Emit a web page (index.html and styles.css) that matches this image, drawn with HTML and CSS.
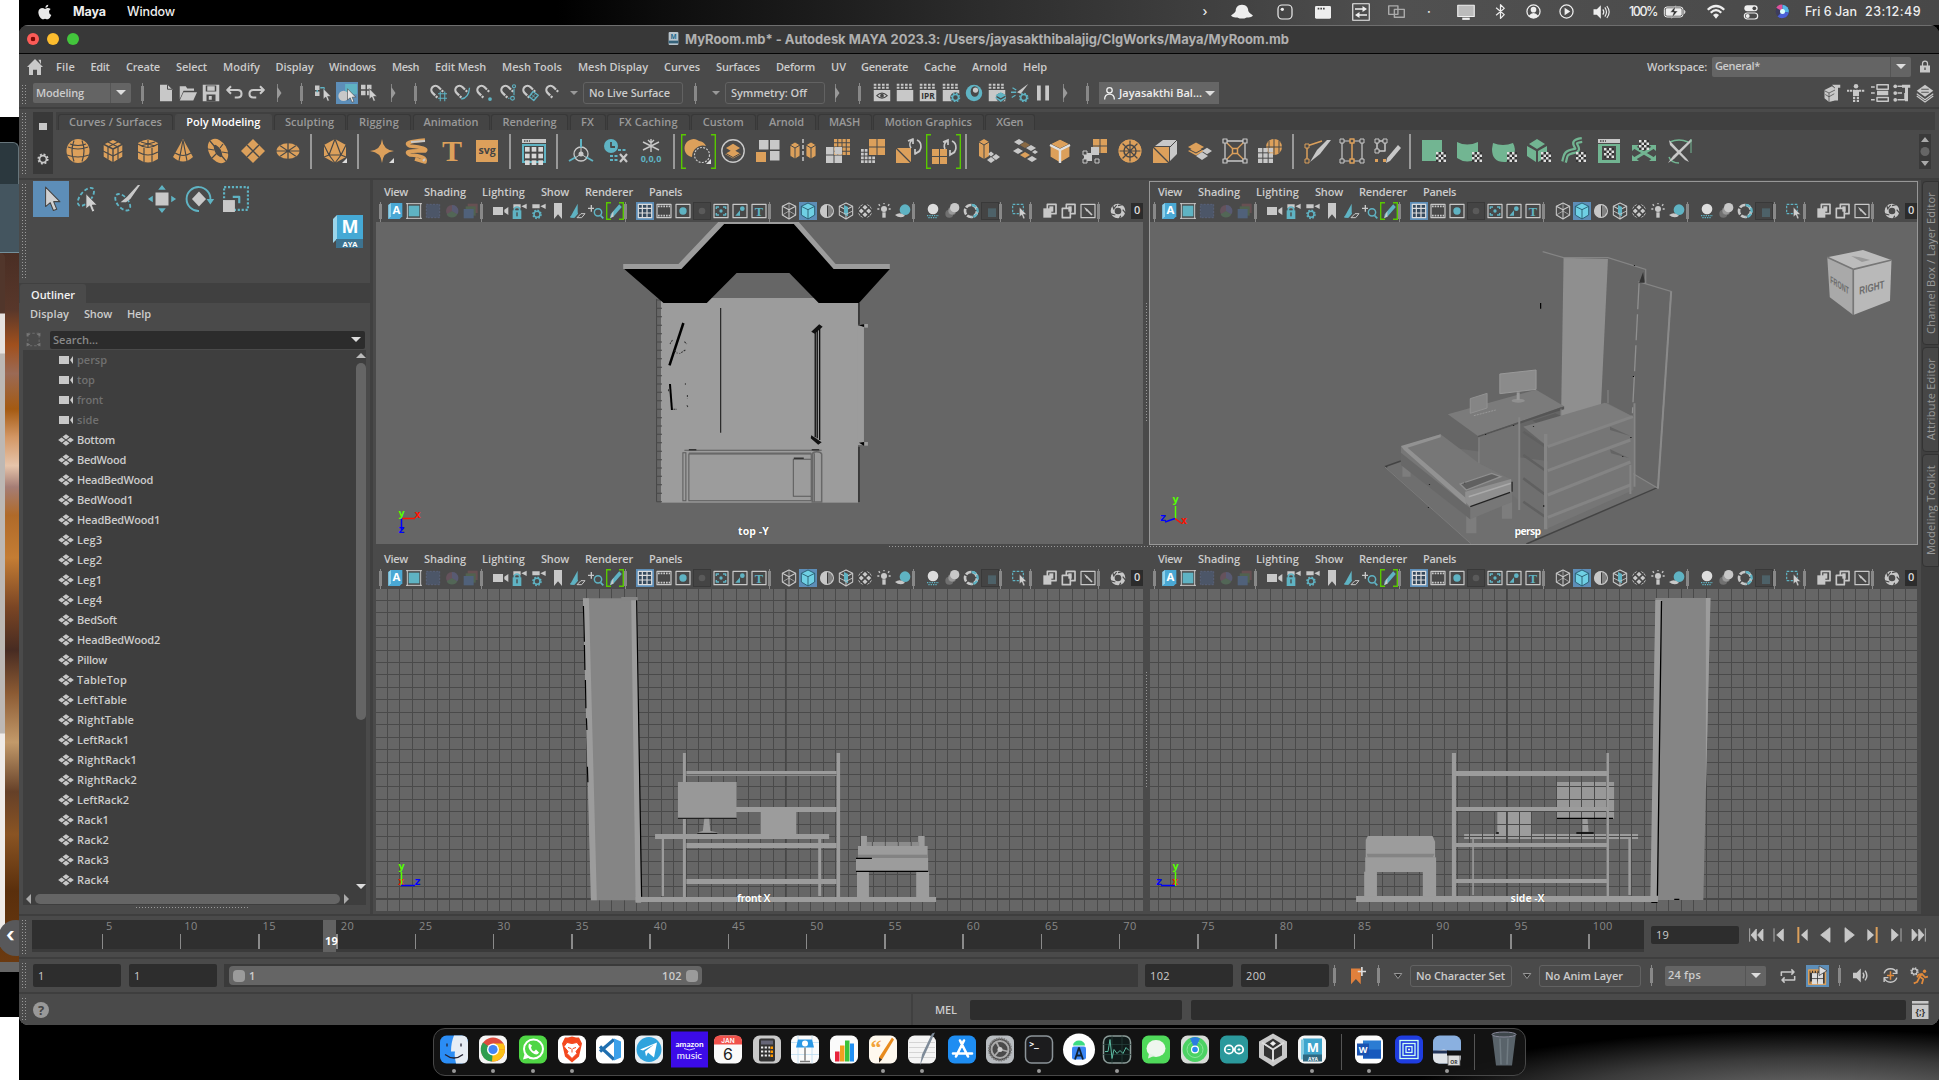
FILE: index.html
```html
<!DOCTYPE html>
<html lang="en">
<head>
<meta charset="utf-8">
<title>MyRoom.mb* - Autodesk MAYA 2023.3</title>
<link rel="stylesheet" href="styles.css">
</head>
<body>
<div class="desktop">
  <aside class="behind">
    <div class="b-white"></div><div class="b-black"></div><div class="b-dark"></div><div class="b-teal"></div>
    <div class="b-photo"><i class="page-edge"></i></div>
    <div class="b-gray"></div><div class="b-black2"></div><div class="b-white2"></div>
    <span class="back">‹</span>
  </aside>
  <div class="screen">
    <header class="macbar row" id="macbar"></header>
    <div class="window">
      <div class="title row" id="title"></div>
      <nav class="menus row" id="menus"></nav>
      <div class="status row grip" id="status"></div>
      <div class="shelf grip">
        <div class="shelf-side"><i class="sq"></i><span id="shelfgear"></span></div>
        <div class="shelf-main">
          <div class="tabs" id="tabs"></div>
          <div class="icons row" id="shelf"></div>
        </div>
      </div>
      <div class="main">
        <div class="left">
          <div class="toolbox grip row" id="toolbox"></div>
          <section class="outliner">
            <div class="otabs"><b data-w="44">Outliner</b></div>
            <div class="omenu"><span data-w="39">Display</span><span data-w="28">Show</span><span data-w="24">Help</span></div>
            <div class="osearch"><span id="frameicon"></span><div class="sfield"><span data-w="45">Search...</span><i class="tri"></i></div></div>
            <div class="tree">
              <div class="rows" id="rows"></div>
              <div class="vscroll"><i class="up"></i><i class="thumb"></i><i class="tri"></i></div>
            </div>
            <div class="hscroll"><i class="lt"></i><i class="thumb"></i><i class="rt"></i></div>
            <div class="dots"></div>
          </section>
        </div>
        <div class="views" id="views"></div>
        <div class="sidetabs">
          <div class="st1"><span data-h="142">Channel Box / Layer Editor</span></div>
          <div class="st2"><span data-h="82">Attribute Editor</span></div>
          <div class="st3"><span data-h="90">Modeling Toolkit</span></div>
        </div>
      </div>
      <div class="time row grip" id="time"></div>
      <div class="range row grip" id="range"></div>
      <div class="cmd row grip" id="cmd"></div>
    </div>
    <footer class="dockarea"><div class="dock row" id="dock"></div></footer>
  </div>
</div>
<script src="app.js"></script>
</body>
</html>
```
FILE: styles.css
```css
* { box-sizing: border-box; }
body { margin: 0; background: #000; font: 600 11px/14px "Open Sans", "Noto Sans", sans-serif; color: #ccc; overflow: hidden; }
svg { display: block; flex: none; overflow: visible; }
.desktop { display: flex; width: 1939px; height: 1080px; overflow: hidden; }
.screen { width: 1920px; display: flex; flex-direction: column; }
.row { display: flex; align-items: center; white-space: nowrap; }
.row > * { flex: none; }
.cell { display: flex; align-items: center; justify-content: center; }
.txt { justify-content: flex-start; }
.h36 { height: 36px; }
.h22 { height: 22px; }

.behind { width: 19px; display: flex; flex-direction: column; position: relative; overflow: hidden; }
.b-white { height: 117px; background: #fff; }
.b-black { height: 25px; background: #000; }
.b-dark { height: 42px; background: #2b383e; border-top: 1px solid #67757b; border-right: 1px solid #67757b; border-top-right-radius: 6px; }
.b-teal { height: 69px; background: #44555f; border-bottom: 1px solid #74909b; }
.b-photo { height: 709px; background: linear-gradient(#4a2e24, #58372a 8%, #a1501d 13%, #9b6a55 17%, #a45a12 22%, #d39765 26%, #e6c4aa 30%, #a57d75 33%, #b06a29 37%, #c47d34 43%, #7a4524 50%, #472b22 56%, #8b5a33 62%, #c39a6a 69%, #654028 76%, #8a5423 82%, #5a2f0c 90%, #6b3a10); }
.page-edge { display: block; width: 5px; height: 694px; background: linear-gradient(#51362b 0 60px, #e6e2df 61px 100px, #bdb8b4 101px 480px, #efebe8 481px); border-top-right-radius: 6px; }
.b-gray { height: 10px; background: #666; }
.b-black2 { height: 45px; background: #000; }
.b-white2 { height: 63px; background: #fff; }
.back { position: absolute; left: -2px; top: 920px; width: 36px; height: 36px; border-radius: 50%; background: #58585a; color: #fff; font: 700 20px/31px "Inter"; padding-left: 8px; }

.macbar { height: 25px; padding-bottom: 2px; background: linear-gradient(90deg, #000 0 28%, #0c0c0c 33%, #2c2c2c 50%, #434343 64%, #505050 72%, #484848 100%); font: 500 12.5px/16px "Inter", sans-serif; color: #eee; }
.macbar b { font-weight: 700; }
.window { height: 1000px; background: #4a4a4a; border-radius: 9px; overflow: hidden; display: flex; flex-direction: column; box-shadow: inset 0 -1px #777; }
.title { height: 29px; padding-bottom: 2px; background: #383838; border-top: 1px solid #6e6e6e; border-bottom: 1px solid #050505; font: 700 13px/16px "Inter", sans-serif; color: #b0b0b0; }
.lamp { width: 12px; height: 12px; border-radius: 50%; }
.red { background: radial-gradient(#7a0a06 2px, #fc5b57 2.6px); }
.yellow { background: #fdbd2e; }
.green { background: #43c53c; }
.menus { height: 27px; padding-bottom: 2px; }
.status, .shelf, .time, .range, .cmd, .toolbox { position: relative; background-color: #4a4a4a; }
.grip::before { content: ""; position: absolute; left: 3px; top: 2px; bottom: 3px; width: 5px; background: repeating-linear-gradient(#4a4a4a 0 2px, transparent 2px 3px), linear-gradient(90deg, #999 1px, transparent 1px 3px, #999 3px 4px, transparent 4px); }
.status { height: 28px; border-bottom: 2px solid #3e3e3e; padding-bottom: 2px; }
.shelf { height: 71px; border-bottom: 2px solid #3e3e3e; display: flex; padding: 3px 4px 0 14px; gap: 3px; }
.shelf-side { width: 20px; height: 62px; background: #393939; display: flex; flex-direction: column; align-items: center; justify-content: space-between; padding: 11px 0 8px; }
.sq { width: 8px; height: 7px; background: #c8c8c8; }
.shelf-main { width: 1879px; }
.tabs { height: 18px; background: #404040; display: flex; gap: 1.5px; padding: 2px 0 0 2px; }
.tab { height: 16px; padding-bottom: 2px; background: #444; border: 1px solid #383838; border-bottom: 0; border-radius: 3px 3px 0 0; color: #999; display: flex; justify-content: center; align-items: center; flex: none; }
.tab.on { background: #4a4a4a; border-color: #4a4a4a; color: #fff; }
.icons { height: 43px; padding-bottom: 1px; }
.vline { width: 2px; height: 35px; background: #999; }
.bar { width: 3px; height: 15px; background: linear-gradient(90deg, #777, #aaa, #777); position: relative; }
.bar::after { content: ""; position: absolute; left: 1px; top: -3px; width: 1px; height: 21px; background: #888; }
.fold { width: 5px; height: 18px; background: #999; clip-path: polygon(0 0, 25% 0, 25% 20%, 100% 50%, 25% 80%, 25% 100%, 0 100%); }
.tri { width: 0; height: 0; border: 5px solid transparent; border-top: 5px solid #ddd; border-bottom: 0; }
.small { border-width: 4px 4px 0; border-top-color: #999; }
.combo { width: 100%; height: 20px; background: linear-gradient(90deg, #646464 calc(100% - 21px), #555 calc(100% - 21px) calc(100% - 20px), #646464 calc(100% - 20px)); border-radius: 2px; display: flex; align-items: center; justify-content: space-between; padding: 0 5px 1px 3px; }
.field { width: 100%; height: 22px; border: 1px solid #626262; border-radius: 3px; display: flex; align-items: center; padding: 0 5px; }
.dark { width: 100%; background: #2d2d2d; border-radius: 2px; display: flex; align-items: center; padding: 0 5px; font-weight: 500; }
.d22 { height: 23px; } .d18 { height: 18px; } .d20 { height: 20px; }
.sel { background: #5d8eb8; }
.user { background: #666; width: 100%; height: 22px; display: flex; align-items: center; justify-content: space-between; padding: 0 4px; color: #eee; }
.cline { width: 2px; height: 31px; background: #404040; }

.main { height: 736px; display: flex; border-bottom: 2px solid #3e3e3e; }
.left { width: 354px; border-right: 3px solid #404040; display: flex; flex-direction: column; flex: none; }
.toolbox { height: 103px; align-items: flex-start; padding-top: 1px; }
.maya { margin-top: 34px; }
.outliner { height: 631px; display: flex; flex-direction: column; }
.otabs { height: 20px; background: #404040; padding: 1px 0 0 1px; }
.otabs b { display: inline-block; background: #4a4a4a; height: 19px; width: 66px; padding: 4px 0 0 11px; color: #f2f2f2; line-height: 14px; font-weight: 600; border-radius: 3px 3px 0 0; font-size: 11px; }
.omenu { height: 23px; display: flex; align-items: center; gap: 15px; padding: 0 0 2px 11px; }
.osearch { height: 24px; display: flex; align-items: center; padding-left: 7px; gap: 6px; padding-top: 3px; }
.sfield { width: 315px; height: 18px; margin-left: 3px; background: #2c2c2c; border-radius: 2px; display: flex; align-items: center; justify-content: space-between; padding: 0 4px 0 3px; color: #888; }
.tree { height: 543px; margin: 0 4px; background: #3e3e3e; display: flex; }
.rows { width: 333px; height: 543px; }
.orow { height: 20px; display: flex; align-items: center; gap: 3px; padding-left: 35px; letter-spacing: .25px; }
.orow.dim { color: #707070; }
.vscroll { width: 10px; display: flex; flex-direction: column; align-items: center; padding: 3px 0 4px; }
.vscroll .thumb { width: 10px; height: 357px; background: #656565; border-radius: 5px; margin: 5px 0 164px; flex: none; }
.up { border: 5px solid transparent; border-bottom: 5px solid #bbb; border-top: 0; }
.hscroll { height: 12px; margin: 0 4px; background: #3e3e3e; display: flex; align-items: center; gap: 4px; padding-left: 3px; }
.hscroll .thumb { width: 305px; height: 10px; background: #656565; border-radius: 5px; }
.lt { border: 5px solid transparent; border-right-color: #aaa; border-left: 0; }
.rt { border: 5px solid transparent; border-left-color: #aaa; border-right: 0; }
.dots { width: 113px; height: 1px; margin: 2px 0 0 117px; background: repeating-linear-gradient(90deg, #999 0 1px, transparent 1px 3px); }

.views { width: 1548px; display: grid; grid-template-columns: 767px 767px; grid-template-rows: 362px 362px; gap: 5px 7px; padding: 2px 0 0 3px; position: relative; flex: none; }
.views::before { content: ""; position: absolute; left: 773px; top: 123px; width: 1px; height: 486px; background: repeating-linear-gradient(#999 0 1px, transparent 1px 3px); clip-path: polygon(0 0, 100% 0, 100% 118px, 0 118px, 0 368px, 100% 368px, 100% 100%, 0 100%); }
.views::after { content: ""; position: absolute; left: 516px; top: 366px; width: 511px; height: 1px; background: repeating-linear-gradient(90deg, #999 0 1px, transparent 1px 3px); }
.panel { display: flex; flex-direction: column; overflow: hidden; min-width: 0; position: relative; }
.panel.active { outline: 1px solid #989898; }
.pmenu { height: 20px; display: flex; align-items: center; gap: 16px; padding-left: 8px; }
.ptools { height: 20px; width: 767px; overflow: hidden; padding-bottom: 2px; }
.ptools .sel { width: 18px; height: 18px; display: flex; align-items: center; justify-content: center; }
.pframe { border: 1px solid #393939; background: #444; }
.exp { background: #2c2c2c; width: 14px; height: 16px; padding-left: 3px; color: #ddd; }
.canvas { height: 322px; background: #666; overflow: hidden; }
.canvas svg { width: 767px; height: 322px; overflow: hidden; }
.canvas svg * { vector-effect: non-scaling-stroke; }
.camname { position: absolute; bottom: 6px; left: 0; width: 100%; text-align: center; color: #fff; font-weight: 700; font-size: 10.5px; text-shadow: 0 0 1px #333; padding-right: 12px; }
.axis { position: absolute; left: 0; bottom: 0; }

.sidetabs { width: 18px; padding: 1px 0 0 1px; background: #3f3f3f; display: flex; flex-direction: column; gap: 2px; color: #999; font-weight: 500; }
.sidetabs div { border: 1px solid #333; background: #474747; border-radius: 4px 0 0 4px; display: flex; align-items: center; justify-content: center; }
.sidetabs span { writing-mode: vertical-rl; transform: rotate(180deg); white-space: nowrap; }
.st1 { height: 164px; } .st2 { height: 105px; } .st3 { height: 113px; }

.time { height: 43px; border-bottom: 2px solid #3e3e3e; padding-bottom: 3px; }
.slider { width: 1612px; height: 32px; background: #2f2f2f; border-bottom: 3px solid #3a3a3a; display: flex; position: relative; margin-top: 1px; color: #888; font-weight: 500; }
.tick { width: 78.26px; height: 29px; flex: none; display: flex; align-items: flex-end; }
.tick i { width: 1.5px; height: 15px; background: #8a8a8a; }
.tick span { align-self: flex-start; margin: -1px 0 0 3px; }
.now { position: absolute; left: 291px; top: 0; width: 13px; height: 32px; background: #626262; color: #fff; font-weight: 700; padding: 14px 0 0 2px; }
.range { height: 35px; border-bottom: 2px solid #3e3e3e; }
.track { width: 914px; height: 23px; background: #3a3a3a; padding: 2px 5px; }
.thumbbar { width: 473px; height: 19px; border-radius: 4px; background: #656565; display: flex; align-items: center; justify-content: space-between; padding: 0 4px; }
.thumbbar span { display: flex; align-items: center; gap: 4px; }
.thumbbar b { font-weight: 600; }
.knob { width: 12px; height: 12px; border-radius: 4px; background: #9b9b9b; }
.cmd { height: 31px; }
.q { width: 16px; height: 16px; border-radius: 50%; background: #999; color: #444; font: 700 13px/16px "Open Sans"; text-align: center; }

.dockarea { height: 55px; padding: 3px 0 0 414px; background: radial-gradient(ellipse 420px 70px at 1800px 75px, #7a7a7a, #3a3a3a 60%, transparent 100%), #000; }
.dock { width: 1093px; height: 48px; border: 1px solid #484848; border-radius: 12px; background: rgba(22,22,22,.85); align-items: stretch; }
.dock .cell { flex-direction: column; justify-content: flex-start; padding-top: 5px; gap: 4px; }
.dot { width: 4px; height: 4px; border-radius: 50%; background: #999; }
.dsep { width: 1px; height: 36px; background: #555; }
```
FILE: app.js
```js
const W = '#c8c8c8', T = '#5fb3c3', O = '#dca05b', G = '#72b592', D = '#484848';
const $ = id => document.getElementById(id);
const svg = (body, w = 24, h = w, vb = '0 0 24 24') =>
  `<svg width="${w}" height="${h}" viewBox="${vb}" fill="none" stroke-linejoin="round">${body}</svg>`;
const p = (d, f = 'none', s = 'none', w = 1.5, x = '') => `<path d="${d}" fill="${f || 'none'}" stroke="${s}" stroke-width="${w}" ${x}/>`;
const r = (x, y, w, h, f = 'none', s = 'none', sw = 1.5, e = '') => `<rect x="${x}" y="${y}" width="${w}" height="${h}" fill="${f}" stroke="${s}" stroke-width="${sw}" ${e}/>`;
const c = (x, y, q, f = 'none', s = 'none', w = 1.5, e = '') => `<circle cx="${x}" cy="${y}" r="${q}" fill="${f}" stroke="${s}" stroke-width="${w}" ${e}/>`;
const t = (x, y, s, z, f, fam = 'Open Sans', wt = 700) => `<text x="${x}" y="${y}" font-size="${z}" fill="${f}" text-anchor="middle" font-family="${fam}" font-weight="${wt}">${s}</text>`;
const grid = (x, y, w, n, f, g = 1) => { let s = '', k = (w - g * (n - 1)) / n; for (let i = 0; i < n; i++) for (let j = 0; j < n; j++) s += r(x + i * (k + g), y + j * (k + g), k, k, f); return s; };
const checker = (x, y) => { let s = r(x, y, 10, 10, '#333'); for (let i = 0; i < 4; i++) for (let j = 0; j < 4; j++) if ((i + j) % 2 == 0) s += r(x + i * 2.5, y + j * 2.5, 2.5, 2.5, '#e0e0e0'); return s; };
const dia = (x, y, w, h, f) => p(`M${x} ${y - h}L${x + w} ${y}L${x} ${y + h}L${x - w} ${y}Z`, f);
const cube = (f, s, w = 1.3) => p('M12 0L22 5V18L12 24L2 18V5Z', f, s, w) + p('M2 5L12 10L22 5M12 10V24', 'none', s, w);
const corner = p('M24 19V24H19Z', '#ddd');
const gear = (x, y, q, f) => c(x, y, q, 'none', f, q * .5) + c(x, y, q * 1.35, 'none', f, q * .5, `stroke-dasharray="${q * .55} ${q * .51}"`);
const arrow = (x, y, k = 1, f = '#d0d0d0') => `<path transform="translate(${x} ${y}) scale(${k})" d="M0 0V15L3.6 12L6 18L8.6 17L6.2 11.2H11Z" fill="${f}" stroke="#444" stroke-width=".8"/>`;

/* Poly-modeling shelf */
const shelf = [
  `<ellipse cx="12" cy="12" rx="11.500" ry="12" fill="${O}"/>` + p('M2 8Q12 12 22 8M1 16Q12 20 23 16M8 1.5Q4 12 8 22.5M16 1.5Q20 12 16 22.5M4 5Q12 8 20 5', 'none', D, 1.2),
  cube(O, D, 1.4) + p('M7 3L17 8V20.5M17 3L7 8V20.5M2 12L12 17L22 12', 'none', D, 1.2),
  p('M2 4V20Q12 27 22 20V4Q12 -3 2 4Z', O) + p('M2 5Q12 12 22 5M2 13Q12 19 22 13M8 9V23M16 9V23M12 1V9M5 3L19 7M19 3L5 7', 'none', D, 1.2),
  p('M12 0L22 18Q12 27 2 18Z', O) + p('M4 14Q12 19 20 14M12 1L8 22M12 1L16 22', 'none', D, 1.2),
  `<ellipse cx="12" cy="12" rx="6" ry="10" transform="rotate(-30 12 12)" fill="none" stroke="${O}" stroke-width="6"/>` + p('M4 2L9 8M2 10L8 11M6 19L11 14M20 22L15 16M22 14L16 13M17 5L14 9', 'none', D, 1.2),
  dia(12, 12, 12, 12, O) + p('M6 6L18 18M18 6L6 18', 'none', D, 1.4),
  '<g transform="translate(0 4) scale(1 .67)">' + c(12, 12, 11.5, O) + p('M12 0V24M0 12H24M4 4L20 20M20 4L4 20', 'none', D, 1.3) + '</g>', '|',
  p('M12 0L23 6V18L12 24L1 18V6Z', O) + p('M12 0L18 16H6ZM1 6L6 16L1 18M23 6L18 16L23 18M6 16L12 24L18 16', 'none', D, 1.2) + corner, '|',
  p('M12 0Q13 11 24 12Q13 13 12 24Q11 13 0 12Q11 11 12 0Z', O) + corner,
  p('M20 1Q-4 3 5 7Q24 9 20 12Q-4 11 5 16Q22 17 20 23L10 20', 'none', O, 3.6) + p('M20 2L6 3M18 22L20 20', 'none', W, 2),
  t(12, 22, 'T', 30, O, 'Liberation Serif'),
  r(1, 1, 22, 22, O) + t(12, 15, 'svg', 10.5, '#444'), '|',
  r(0, 0, 24, 4, W) + p('M2 2H8', 'none', D, 1.5, 'stroke-dasharray="1.5 1"') + r(0, 5, 24, 19, T) + r(2, 7, 20, 15, D) + grid(3, 8, 18, 3, '#d8d8d8', 2), '|',
  c(12, 15, 7, 'none', W, 1.3) + c(12, 15, 2.5, W) + p('M12 9V0M7 18L0 22M17 18L24 22', 'none', T, 2) + p('M12 15V8M12 15L6 19M12 15L18 19', 'none', W, 1),
  c(7, 7, 7, T) + p('M7 3V8H11', 'none', D, 1.8) + p('M14 11H22M6 17H14M6 21H14', 'none', T, 1.8, 'stroke-dasharray="3 1.5"') + p('M16 15L23 23M23 15L16 23', 'none', W, 2.2),
  p('M12 0V13M4 3L20 11M20 3L4 11M9 1L12 4L15 1', 'none', W, 1.4) + t(12, 23, '0,0,0', 9, T), '|',
  '[' + p('M12 1A9 9 0 1 0 5 17A11 11 0 0 1 19 6A9 9 0 0 0 12 1Z', O) + c(15, 15, 7.5, 'none', W, 1.2, 'stroke-dasharray="2 1.3"') + corner,
  c(12, 12, 11.2, 'none', W, 1.4) + dia(12, 9, 7, 4.3, O) + dia(12, 15, 8, 4.6, O) + p('M4 14L12 18.5L20 14', 'none', D, 1),
  r(3, 1, 9.5, 9.5, W) + r(14, 1, 9.5, 9.5, W) + r(14, 12, 9.5, 9.5, W) + r(0, 13, 10, 10, O),
  p('M4 3L9 6V17L4 20L-1 17V6ZM20 3L25 6V17L20 20L15 17V6Z', O, D, .8) + p('M-1 6L4 9L9 6M4 9V20M15 6L20 9L25 6M20 9V20', 'none', D, 1) + p('M12 0V24', 'none', W, 1.5, 'stroke-dasharray="4 2"'),
  grid(8, 0, 16, 4, O) + grid(0, 8, 16, 2, W),
  grid(0, 10, 14, 4, W) + r(7, 0, 17, 17, D) + grid(8, 0, 16, 2, O),
  r(0, 9, 15, 15, O) + p('M0 9L15 24', 'none', D, 1.3) + p('M15 9A6 6 0 0 1 16 1M21 1A7 7 0 0 1 20 14M12 2L17 0V5M24 12L19 15V10', 'none', W, 1.7),
  '[' + grid(0, 9, 15, 2, O) + p('M13 9A6 6 0 0 1 15 1M20 1A7 7 0 0 1 19 14M11 2L16 0V5M23 12L18 15V10', 'none', W, 1.7), '|',
  p('M6 0L11 3V17L6 20L1 17V3Z', O) + p('M1 3L6 6L11 3M6 6V20', 'none', D, 1) + dia(13, 21, 4, 3, W) + dia(18, 18, 4, 3, W) + dia(13, 15, 3, 2.5, W),
  dia(6, 3, 5, 3, W) + dia(18, 9, 5, 3, W) + dia(12, 6, 5, 3, '#8a6a44') + dia(5, 12, 5, 3, W) + dia(12, 16, 5, 3, O) + dia(19, 20, 5, 3, W) + dia(22, 13, 3, 2, W),
  cube(O, D, 1.2) + p('M2 6L12 11L22 6M12 11V24', 'none', '#e0e0e0', 2.4),
  grid(10, 0, 14, 2, O) + r(1, 14, 8, 8, W) + r(8, 8, 8, 8, W) + r(0, 12, 4, 4, D, W, 1) + r(0, 20, 4, 4, D, W, 1) + r(12, 20, 4, 4, D, W, 1),
  c(12, 12, 11.5, O) + c(12, 12, 6, 'none', D) + p('M12 0V24M0 12H24M4 4L20 20M20 4L4 20', 'none', D, 1.2) + c(12, 12, 11, 'none', O, 1),
  r(0, 8, 16, 16, O) + p('M0 8L16 24', 'none', D, 1.2) + p('M2 7L10 1H24V15L17 22V7Z', W) + p('M17 8L24 1', 'none', D, 1),
  dia(8, 8, 8, 4.5, O) + dia(8, 12, 8, 4.5, O) + dia(19, 12, 5, 3.2, W) + dia(14, 17, 6, 4, W) + p('M0 10L8 14L15 10', 'none', D, 1),
  r(2, 2, 20, 20, 'none', W, 1.3) + p('M3 3L21 21M21 3L3 21', 'none', O, 1.3) + r(9.5, 9.5, 5, 5, D, O) + [[0, 0], [20, 0], [0, 20], [20, 20]].map(a => r(a[0], a[1], 4, 4, D, W, 1.2)).join(''),
  c(16, 8, 8, O) + p('M16 0V16M8 8H24M11 2V14M21 2V14', 'none', D, 1) + grid(0, 9, 15, 3, W), '|',
  p('M2 22V7L17 2', 'none', O) + r(0, 5, 4, 4, D, O, 1) + r(0, 20, 4, 4, D, O, 1) + p('M26 1L15 15L5 23L12 11L22 1Z', W),
  p('M2 2H22M2 22H22M2 2V22M22 2V22', 'none', W, 1.2) + p('M12 2V22', 'none', O) + [[0, 0], [20, 0], [0, 20], [20, 20]].map(a => r(a[0], a[1], 4, 4, D, W, 1)).join('') + r(10, 0, 4, 4, D, O) + r(10, 20, 4, 4, D, O),
  r(2, 2, 8, 10, 'none', W) + r(0, 0, 4, 4, D, W, 1) + r(8, 0, 4, 4, D, W, 1) + r(0, 10, 4, 4, D, W, 1) + r(0, 20, 3, 3, O) + r(8, 20, 3, 3, O) + p('M23 6L26 9L15 22L11 24L12 19Z', W), '|',
  r(0, 1, 20, 21, G) + checker(14, 13),
  p('M0 3Q10 8 21 3V19Q10 26 0 19Z', G) + checker(15, 13),
  p('M1 4Q11 8 21 4Q27 16 14 23Q0 24 0 10Z', G) + checker(15, 13),
  p('M10 0L18 5L10 10L2 5ZM0 7L9 12V23L0 17ZM20 7L11 12V23L20 18Z', G) + checker(14, 13),
  p('M20 1C4 3 22 10 12 12S4 17 2 23', 'none', G, 6) + p('M20 1C4 3 22 10 12 12S4 17 2 23', 'none', D, 1.5) + checker(14, 13),
  r(1, 0, 22, 4, W) + p('M3 2H9', 'none', D, 1.5, 'stroke-dasharray="1.5 1"') + r(1, 5, 22, 19, G) + r(5, 7, 14, 14, D) + checker(7, 9),
  p('M2 8L22 20M22 8L2 20', 'none', G, 3) + p('M0 12V6H7ZM24 12V6H17ZM0 16V22H7ZM24 16V22H17Z', G) + checker(7, 1),
  p('M3 3Q12 -1 21 3M2 18Q4 24 12 24', 'none', G, 1.5) + p('M2 1L20 20L22 23L18 21L3 6Z', W) + p('M24 0L6 17L1 24L7 20L25 2Z', W) + p('M24 0V14', 'none', G, 1)
];

/* Viewport toolbar */
const boxed = s => r(1.5, 2, 21, 20, D, W, 1.8) + s;
const cam = p('M0 6H15V18H0ZM17 10L23 6V18L17 14Z', W);
const camS = p('M2 2H13V8H2ZM14 5L22 1V9Z', W);
const tools = [
  '|', p('M2 3L6 0H23V20L19 24H2Z', '#4aa8d4') + p('M2 3L6 0V20L2 24Z', '#8fd0e8') + t(14, 17, 'A', 17, '#fff'),
  r(4, 4, 16, 16, T) + p('M0 1H24M0 23H24M2 0V24M22 0V24', 'none', W, 1.5),
  r(2, 2, 20, 20, '#4c5668', '#58627a', 1.5, 'stroke-dasharray="3 2"'), c(12, 12, 9, '#65525c') + p('M12 12L4 17A9 9 0 0 0 20 17Z', '#526656') + p('M12 12V3A9 9 0 0 1 20 17Z', '#585a72'),
  r(7, 1, 15, 14, '#675052') + r(4, 5, 15, 14, '#51624f') + r(1, 9, 15, 14, '#50617a'),
  '|', cam, camS + r(1, 11, 13, 13, T) + c(7.5, 10, 4, 'none', T, 2.5) + r(6.5, 14, 2, 6, D), camS + gear(9, 17, 4.5, T), p('M6 0H18V24L12 17L6 24Z', W),
  p('M2 21L13 1V14L7 22Z', T) + p('M2 21H8L13 15', 'none', T, 2) + p('M12 22H19L24 16H18Z', 'none', W, 1.5), c(15, 14, 5.5, 'none', T, 2.2) + p('M19 19L23 23', 'none', T, 2.5) + p('M0 8H9M5 3V13', 'none', W, 2),
  '[' + p('M18 2L22 6L9 21L4 23L5 17Z', T) + p('M9 12L4 23L9 21Z', W), '|',
  '*' + r(2, 2, 20, 20, '#35495c', '#ddd', 1.8) + p('M8 2V22M15 2V22M2 8H22M2 15H22', 'none', '#ddd', 1.8),
  boxed(r(5, 8, 14, 8, D) + p('M3 5H21M3 19H21', 'none', W, 2.5, 'stroke-dasharray="2.5 1.5"')), boxed(c(12, 12, 5.5, T)), '#' + c(12, 12, 5, '#5a5a5a'),
  boxed(p('M5 9V6H9M15 6H19V9M19 15V18H15M9 18H5V15', 'none', T, 2.2) + c(12, 12, 2.5, T)), boxed(p('M5 19L12 11V19Z', T) + c(15.5, 8.5, 3.5, T)), boxed(t(12, 19, 'T', 19, T, 'Liberation Serif')), '|',
  cube('none', W, 1.6) + p('M2 18L12 12L22 18M12 1V12', 'none', W, 1), '*' + cube('#6fd0e4', '#24566a', 1.3), c(12, 12, 10, W) + p('M12 2A10 10 0 0 1 12 22Z', '#3a3a3a') + c(12, 12, 9.5, 'none', W, 2) + p('M15 4V20M18 6V18', 'none', W, 1.5),
  cube('none', W, 1.6) + p('M9 3L15 6V20L9 17Z', T) + p('M2 12L12 17L22 12', 'none', W, 1.3), c(12, 12, 10.5, W) + p('M12 1L23 12L12 23L1 12ZM5 5L19 19M19 5L5 19', 'none', '#444', 2.5),
  c(12, 9, 4.5, W) + r(9.5, 14, 5, 8, W) + p('M12 0V2M2 9H5M19 9H22M4 2L6 4M20 2L18 4', 'none', W, 2), c(15, 10, 8, T) + p('M0 18Q8 12 15 19Q8 24 0 18Z', W), '|',
  c(12, 9, 8, '#ddd') + p('M3 19H21M5 22H19', 'none', T, 2, 'stroke-dasharray="2 1.5"'), c(8, 16, 6, '#707070') + c(12, 12, 6, '#999', '#555', .5) + c(16, 7, 7, W), c(12, 12, 9, 'none', W, 4, 'stroke-dasharray="9 2"') + p('M13 3A9 9 0 0 1 13 21', 'none', T, 3.5, 'stroke-dasharray="7 2"'), '#' + r(9, 8, 12, 13, '#4d6168'),
  '|', r(1, 2, 16, 14, 'none', T, 1.8, 'stroke-dasharray="4 2"') + arrow(11, 6, 1), '|',
  r(8, 2, 13, 14, D, W, 2.5) + r(2, 8, 12, 14, W) + r(11, 5, 6, 8, W), r(8, 2, 13, 14, D, W, 2.5) + r(2, 8, 12, 14, D, W, 2.5) + r(11, 5, 5, 8, W), boxed(p('M6 6L11 9L10 13Z', W) + p('M10 10L18 18', 'none', W, 2.5)), '|',
  c(12, 12, 8, 'none', W, 6) + p('M12 4L20 2M19 10L24 16M16 19L14 24M8 18L0 16M6 10L4 3M10 3L6 8', 'none', D, 1.8)
];

/* Flow placement: each item is [left, width, html]; gaps become margins. */
function place(el, x0, items, cls = '') {
  let cur = x0;
  el.innerHTML = items.map(([x, w, h, k = '']) => {
    const m = x - cur; cur = x + w;
    return `<div class="cell ${cls} ${k}" style="margin-left:${m.toFixed(1)}px;width:${w}px">${h}</div>`;
  }).join('');
}
const C = (x, w, h, k) => [x - w / 2, w, h, k];
const tx = (x, w, s, k = '') => [x, w, `<span data-w="${w}">${s}</span>`, 'txt ' + k];
const bracket = (s, w, h) => `<svg width="${w + 4}" height="${h}" viewBox="0 0 ${w + 4} ${h}" fill="none"><path d="M5 .7H.7V${h - .7}H5M${w - 1} .7H${w + 3.3}V${h - .7}H${w - 1}" stroke="#58c800" stroke-width="1.4"/>${s}</svg>`;

/* macOS menu bar */
const E = '#eee';
place($('macbar'), 19, [
  C(45, 16, svg(p('M17 1Q13 1 12.500 5.500Q16.500 5.500 17 1ZM12 7.500Q10 6 7.500 6Q2 7 2 13Q3 20 8 23Q10 23 12 22Q14 23 16.500 23Q20 21 21.500 16.500Q18 15 18 11.500Q18 9 20.500 7.500Q18 5.500 15.500 6Q13.500 6.500 12 7.500Z', '#e8e8e8'), 16)),
  [73, 33, '<b data-w="33">Maya</b>', 'txt'], tx(127, 48, 'Window'),
  C(1205, 8, '›'), C(1242, 22, svg(p('M14 1C8 1 6 5 6 9C5 12 1 13 0 15Q3 18 8 17Q14 20 20 17Q25 18 28 15C27 13 23 12 22 9C22 5 20 1 14 1Z', E), 22, 15, '0 0 28 19')),
  C(1285, 16, svg(r(1.5, 1.5, 21, 21, 'none', E, 1.8, 'rx="6"') + c(8, 8, 2.5, E), 16)),
  C(1323, 16, svg(r(0, 3, 24, 19, E, 'none', 0, 'rx="2"') + p('M4 7H16', 'none', '#444', 2.5, 'stroke-dasharray="2.5 1.5"'), 16)),
  C(1361, 18, svg(r(1, 1, 22, 22, 'none', E, 1.5) + p('M4 8H16M8 16H20', 'none', E, 2.2) + p('M14 4L20 8L14 12ZM10 12L4 16L10 20Z', E), 18)),
  C(1396, 17, svg(r(1, 4, 13, 12, 'none', '#aaa', 2) + r(9, 9, 14, 11, 'none', '#aaa', 2), 17)), C(1429, 6, '·'),
  C(1466, 18, svg(r(1, 3, 22, 15, '#bbb', E, 1.5) + p('M7 21H17', 'none', E, 3), 18)),
  C(1500, 14, svg(p('M5 6L18 17L12 23V1L18 7L5 18', 'none', E, 2), 15)),
  C(1533, 16, svg(c(12, 12, 10.5, 'none', E, 2) + c(12, 9, 4.5, E) + p('M4 19Q12 10 20 19Q12 26 4 19', E), 15)),
  C(1566, 16, svg(c(12, 12, 10.5, 'none', E, 2) + p('M9 6L18 12L9 18Z', E), 15)),
  C(1601.5, 20, svg(p('M0 8H5L11 2V22L5 16H0Z', E) + p('M14 8Q17 12 14 16M17 5Q22 12 17 19M20 3Q27 12 20 21', 'none', E, 1.7), 19, 16)),
  tx(1629, 28, '100%'), C(1675, 24, svg(r(1, 3, 28, 15, 'none', E, 1.5, 'rx="4"') + r(3, 5, 24, 11, E, 'none', 0, 'rx="2"') + p('M31 8Q33 10 31 13', E, E) + p('M18 1L10 11H15L12 20L21 9H16Z', '#333', E, .6), 24, 14, '0 0 34 21')),
  C(1715.5, 18, svg(p('M1 9Q12 -1 23 9M5 13Q12 6 19 13', 'none', E, 3) + p('M8 16Q12 12 16 16L12 21Z', E), 18)),
  C(1751, 16, svg(r(2, 2, 20, 9, E, 'none', 0, 'rx="4.5"') + c(17, 6.5, 2.8, '#444') + r(2, 13.5, 20, 9, 'none', E, 1.8, 'rx="4.5"') + c(7, 18, 3, E), 16)),
  C(1782, 15, svg(c(12, 12, 11, '#3c3c5c') + p('M12 12L2 6A11 11 0 0 1 12 1Z', '#e0529c') + p('M12 12V1A11 11 0 0 1 22 14Z', '#54b8e8') + p('M12 12L22 14A11 11 0 0 1 4 20Z', '#4a60d8') + c(12, 12, 4, '#dff'), 15)),
  tx(1805, 52, 'Fri 6 Jan'), tx(1865, 56, '23:12:49')
]);
place($('title'), 19, [C(33, 12, '<i class="lamp red"></i>'), C(53, 12, '<i class="lamp yellow"></i>'), C(73, 12, '<i class="lamp green"></i>'),
  C(673, 14, svg(r(3, 0, 18, 24, '#b8c4cc', 'none', 0, 'rx="2"') + t(12, 13, 'M', 12, '#1f6a8c') + r(3, 16, 18, 5, '#35627a'), 13, 15)),
  tx(685, 604, 'MyRoom.mb* - Autodesk MAYA 2023.3: /Users/jayasakthibalajig/ClgWorks/Maya/MyRoom.mb')]);

const menuData = [['File', 56, 19], ['Edit', 90.5, 19], ['Create', 126, 34], ['Select', 176, 31], ['Modify', 223, 37], ['Display', 275.5, 38], ['Windows', 329, 47], ['Mesh', 392, 27], ['Edit Mesh', 435, 51], ['Mesh Tools', 502, 60], ['Mesh Display', 578, 70], ['Curves', 664, 36], ['Surfaces', 716, 44], ['Deform', 776, 39], ['UV', 831, 15], ['Generate', 861, 47], ['Cache', 924, 32], ['Arnold', 972, 35], ['Help', 1023, 24]];
const lock = p('M2 10H22V24H2Z', W) + p('M7 11V6A5 5 0 0 1 17 6V11', 'none', W, 2.5) + p('M12 14V19', 'none', D, 2.5);
place($('menus'), 19, [C(35, 16, svg(p('M12 0L24 12H21V24H15V16H9V24H3V12H0ZM17 1H21V8Z', W), 16)), ...menuData.map(a => tx(a[1], a[2], a[0])),
  tx(1647, 60, 'Workspace:'), [1712, 199, '<div class="combo"><span data-w="45">General*</span><i class="tri"></i></div>'], C(1925, 14, svg(lock, 12, 15))]);

const bar = '<i class="bar"></i>', fold = '<i class="fold"></i>', stri = '<i class="tri small"></i>';
const magnet = `<g transform="rotate(-45 9 9)">${p('M4 17V8A5.5 5.5 0 0 1 15 8V17', 'none', W, 3)}${p('M2 13.5H18', 'none', D, 1.3)}</g>`;
const clap = p('M1 1H23M1 5H23', 'none', W, 2.5, 'stroke-dasharray="3.5 2"') + r(1, 8, 22, 15, W);
const st = [
  [166, p('M4 1H14L20 7V23H4Z', W) + p('M14 1V7H20', 'none', D, 1.3)], [188, p('M1 20V3H9L11 6H20V9H6Z', W) + p('M6 11H24L19 22H1Z', W)], [211, p('M1 1H23V23H1Z', W) + r(5, 2, 14, 8, D) + r(7, 3, 10, 6, W) + r(6, 14, 12, 9, D) + r(9, 16, 4, 5, W)],
  [234, p('M3 8H17Q22 8 22 13T17 18H13M8 3L3 8L8 13', 'none', W, 2.8)], [257, p('M21 8H7Q2 8 2 13T7 18H11M16 3L21 8L16 13', 'none', W, 2.8)],
  [323.5, r(0, 2, 6, 6, W) + r(0, 10, 6, 6, W) + p('M7 5H12V10M3 8V11', 'none', T, 2) + arrow(11, 6, .95)], [347, '*' + r(9, 0, 15, 13, T) + c(7, 15, 6.5, W) + arrow(12, 6, .95, '#e4e4e4')], [370, grid(0, 1, 14, 2, W, 2) + arrow(11, 6, .95)],
  [438, magnet + p('M12 13H24M12 19H24M15 10V23M21 10V23', 'none', T, 1.4)], [461.5, magnet + p('M11 20Q21 19 22 5', 'none', T, 1.8)], [484, magnet + c(20, 20, 2.5, T)], [507.5, magnet + c(20, 3, 2, 'none', T, 1.5) + c(18, 19, 2.5, 'none', T, 1.5) + p('M20 6V15M14 19H12', 'none', T, 1.5)], [530, magnet + p('M16 10L23 15L17 22L11 17Z', D, T, 1.8) + p('M13 13L20 19M20 12L14 19', 'none', T, 1)], [553, magnet],
  [882, clap + p('M5 15.5Q12 9 19 15.5Q12 22 5 15.5Z', 'none', D, 1.6) + c(12, 15.5, 2.5, D)], [905, clap], [928, clap + t(12, 20, 'IPR', 11, '#333')], [951, clap + c(18, 18, 7, D) + gear(18, 18, 4, T)], [974, c(12, 12, 11, T) + `<ellipse cx="13" cy="10" rx="5.500" ry="7" fill="${D}"/>` + c(14, 8, 3.5, W)], [997, clap + c(17, 18, 6, D) + dia(17, 15, 7, 4, T) + p('M10 17L17 21L24 17V19L17 24L10 19Z', T)], [1020, p('M23 0L13 13L8 11L20 2Z', W) + gear(17, 18, 4, T) + p('M0 11H7M2 5L7 8M1 18L6 15', 'none', T, 1.7)], [1043, p('M4 2H9V22H4ZM15 2H20V22H15Z', W)]
].map(a => { const s = a[1][0] == '*'; return C(a[0], 22, s ? svg(a[1].slice(1), 19) : svg(a[1], 18), s ? 'sel h22' : ''); });
const cell = (x, h) => C(x, 8, h);
place($('status'), 19, [[33, 98, '<div class="combo"><span data-w="48">Modeling</span><i class="tri"></i></div>'], cell(142, bar), cell(279, fold), cell(301.5, bar), cell(393, fold), cell(415.5, bar), cell(574, stri),
  [583, 100, '<div class="field"><span data-w="81">No Live Surface</span></div>'], cell(695.5, bar), cell(716, stri), [725, 99.5, '<div class="field"><span data-w="76">Symmetry: Off</span></div>'], cell(837, fold), cell(859, bar), cell(1065, fold), cell(1087, bar),
  [1099, 120, `<div class="user">${svg(c(12, 7, 5, 'none', E, 2.5) + p('M3 24Q3 14 12 14T21 24', 'none', E, 2.5), 13, 16)}<span data-w="83">Jayasakthi Bal...</span><i class="tri"></i></div>`],
  ...st, C(1832, 20, svg(p('M2 8L12 3L16 6V22L8 24L2 19Z', W) + p('M12 1H23V5H20V22H16V5', W) + p('M2 9L8 12L16 8M8 12V24M3 14L8 17L15 13', 'none', D, 1), 18)), C(1856, 18, svg(c(12, 3, 3, W) + p('M0 9H24', 'none', W, 2.5, 'stroke-dasharray="3 1"') + r(8, 8, 8, 8, W) + p('M9.5 24V17M14.5 24V17', 'none', W, 3, 'stroke-dasharray="3 1"'), 18)),
  C(1880, 18, svg(p('M0 4H5M0 12H5M0 21H5', 'none', W, 2) + r(8, 1, 15, 6, 'none', W, 2) + r(8, 9, 15, 6, W) + r(8, 18, 15, 5, 'none', W, 2), 18)), C(1902, 18, svg(c(3, 3, 2.5, W) + c(3, 12, 2.5, W) + c(3, 21, 2.5, W) + p('M6 3H12M6 12H12M6 21H16V12', 'none', W, 2) + p('M12 1H23V5H20V23H16V5H12Z', W), 18)),
  C(1925, 18, svg(dia(12, 9, 11, 8, W) + p('M1 13L12 21L23 13M1 16L12 24L23 16', 'none', W, 1.5) + p('M7 7H17M7 11H17', 'none', D, 1.2), 18))
].sort((a, b) => a[0] - b[0]));

$('shelfgear').innerHTML = svg(gear(12, 12, 6, W), 14);
$('tabs').innerHTML = [['Curves / Surfaces', 115, 93], ['Poly Modeling', 97.5, 74], ['Sculpting', 72, 49], ['Rigging', 64, 40], ['Animation', 77, 55], ['Rendering', 77, 54], ['FX', 36, 13], ['FX Caching', 82.5, 59], ['Custom', 64.5, 41], ['Arnold', 59, 35], ['MASH', 54, 31], ['Motion Graphics', 110.5, 87], ['XGen', 49.5, 27]]
  .map((a, i) => `<div class="tab ${i == 1 ? 'on' : ''}" style="width:${a[1]}px"><span data-w="${a[2]}">${a[0]}</span></div>`).join('');
let sx = 78.4; const sh = [];
shelf.forEach(s => {
  if (s == '|') { sh.push(C(sx - 12, 4, '<i class="vline"></i>')); sx += 12; return; }
  sh.push(s[0] == '[' ? C(sx, 36, bracket(`<g transform="translate(6 6)">${s.slice(1)}</g>`, 31, 35)) : C(sx, 28, svg(s)));
  sx += 35;
});
sh.push([1919, 12, svg(r(0, 0, 12, 35, '#3a3a3a') + p('M2 8L6 3L10 8ZM2 27L6 32L10 27Z', '#aaa') + c(6, 17.5, 4.5, '#666'), 12, 35, '0 0 12 35')]);
place($('shelf'), 56, sh);

const TS = (x, s, k) => C(x, 36, svg(s, 26), 'h36 ' + (k || ''));
place($('toolbox'), 19, [TS(51, arrow(7, 1, 1.2), 'sel'), TS(87, `<ellipse cx="11" cy="10" rx="5" ry="10" transform="rotate(40 11 10)" stroke="${T}" stroke-width="1.700" stroke-dasharray="3.500 2"/>` + arrow(11, 7, .95)),
  TS(125.5, `<ellipse cx="9" cy="15" rx="5" ry="9" transform="rotate(-40 9 15)" stroke="${T}" stroke-width="1.700" stroke-dasharray="3.500 2"/>` + p('M25 -1L16 12L12 15L7 15L13 10L23 -1Z', W)),
  TS(162, r(6, 6, 12, 12, W) + p('M12 -1L15.5 3.5H8.5ZM12 25L15.5 20.5H8.5ZM-1 12L3.500 9V15ZM25 12L20.500 9V15Z', T)), TS(199, dia(12, 12, 6.5, 7, W) + p('M12 23A11 11 0 1 1 22.5 13', 'none', T, 1.8) + p('M19 12H26L22.5 17Z', T)),
  TS(236, r(1, 1, 22, 21, 'none', T, 2, 'stroke-dasharray="2 1.6"') + r(0, 13, 11, 11, W) + p('M9 10H15V16', 'none', T, 2)),
  [333, 30, svg(p('M0 4L4 0V24L0 28Z', '#9bd5ea') + p('M4 0H30V24H4Z', '#45a9d5') + p('M3 24H30V33H3Z', '#3d7390') + t(17, 18, 'M', 18, '#fff') + t(17, 31.5, 'AYA', 7.5, '#fff'), 30, 33, '0 0 30 33'), 'maya']]);

$('frameicon').innerHTML = svg(p('M1 1L7 4L1 7ZM23 1L17 4L23 7ZM1 17L7 20L1 23ZM23 17L17 20L23 23Z', '#777') + r(3, 2, 18, 20, 'none', '#777', 1.2, 'stroke-dasharray="4 3"'), 15);
const names = { persp: 30, top: 18, front: 26, side: 22, Bottom: 38, BedWood: 49, HeadBedWood: 76, BedWood1: 56, HeadBedWood1: 83, Leg3: 25, Leg2: 25, Leg1: 25, Leg4: 25, BedSoft: 40, HeadBedWood2: 83, Pillow: 30, TableTop: 50, LeftTable: 50, RightTable: 57, LeftRack1: 52, RightRack1: 60, RightRack2: 60, LeftRack2: 52, Rack1: 32, Rack2: 32, Rack3: 32, Rack4: 32 };
const mesh = svg(dia(8, 2.8, 3.5, 2.6, W) + dia(8, 9.2, 3.5, 2.6, W) + dia(3.6, 6, 3.5, 2.6, W) + dia(12.4, 6, 3.5, 2.6, W), 16, 12, '0 0 16 12');
const camIcon = svg(p('M1 2H11V10H1ZM12 6L15 2V10Z', W), 16, 12, '0 0 16 12');
$('rows').innerHTML = Object.entries(names).map(([n, w], i) => `<div class="orow ${i < 4 ? 'dim' : ''}">${i < 4 ? camIcon : mesh}<span data-w="${w}">${n}</span></div>`).join('');

/* Viewport scenes */
const L = '#9c9c9c';
const q = (x, y, w, h, f = L) => r(x, y, w, h, f);
const lines = (mx, px, x0, x1) => {
  let d = '';
  for (let x = mx - Math.floor((mx - x0) / px) * px; x < x1; x += px) d += `M${x.toFixed(1)} 132V1098`;
  for (let y = 1062 - 24 * 37.35; y < 1098; y += 37.35) d += `M${x0} ${y.toFixed(1)}H${x1}`;
  return p(d, 'none', '#4a4a4a', 1, 'shape-rendering="crispEdges"') + p(`M${mx} 132V1098M${x0} 1062H${x1}`, 'none', '#474747', 1.8);
};
let ladder = ''; for (let y = 360; y < 966; y += 25.2) ladder += `M576 ${y.toFixed(0)}H587`;
const sceneTop = q(585, 354, 396, 614) + q(981, 438, 12, 357) + p(ladder + 'M576 357V965', 'none', '#484848', 1) +
  p('M678 369L708 319L737 279H843L890 354H690Z', '#666') + q(680, 354, 220, 16) +
  p('M509 252H620L700 126H862L936 252H1045V267H509Z', L) +
  p('M712 132H852L932 267H1045L983 369H902L843 279H737L677 369H590L511 267H626Z', '#000') +
  p('M705 384V758M983 369V434M983 800V966', 'none', '#111', 1) + p('M630 429L602 556', 'none', '#000', 2.5) + p('M603 612L607 690', 'none', '#000', 2) +
  p('M608 480L603 492M632 485L637 492M634 510L622 521M612 512L618 520M634 610V614M638 645V655M637 676L640 684M610 688H617M600 628V636', 'none', '#333', 1, 'stroke-dasharray="2 1"') +
  p('M895 450V772M899 450V775M904 445V780', 'none', '#000', 1.2) + p('M903 433L910 440L894 461L887 455ZM887 766L908 787L901 794L886 775Z', '#111') +
  p('M983 436L993 433V441ZM983 788L993 786V797Z', '#000') + q(994, 432, 7, 11) + q(994, 786, 7, 11) +
  p('M632 811H908M629 818V962H635V818ZM641 822V962H887V822ZM887 838H851V949H887', 'none', '#5a5a5a', 1) + p('M641 820H887M889 968V822Q890 815 898 815T908 822V966H889M893 820V964', 'none', '#686868', 1.5) + p('M641 809H656M888 809H903M852 835H872', 'none', '#333', 1.5);
const scenePersp = p('M480 858L512 843L600 800L966 880L1017 925L758 1092H650Z', '#6f6f6f') + p('M480 860L512 843M758 1092L1015 923', 'none', '#444', 1.5) + p('M480 860L650 1092', 'none', '#7b7b7b', 1) +
  p('M831 233L918 237L903 720H826Z', '#8f8f8f') + p('M790 215L831 233H918L992 268V308L978 305L1042 334L1016 925L966 880', 'none', '#858585', 1.2) + p('M1042 334L1016 925', 'none', '#8a8a8a', 2) + p('M979 310L966 700', 'none', '#909090', 1.3, 'stroke-dasharray="26 5"') + p('M987 276L979 308H990Z', '#333') + p('M786 369V386M970 256V258M968 588V591', 'none', '#000', 1.2) +
  p('M604 703L777 629L832 679L663 768Z', '#7b7b7b') + p('M663 768L832 679V688L663 772Z', '#555') + p('M665 772V855L742 960V732Z', '#727272') + p('M665 772V850M826 686V712', 'none', '#888', 1) +
  p('M770 722L815 700L826 708V730L785 735Z', '#5c5c5c') +
  p('M706 582L777 570V628L706 641Z', '#8b8b8b', '#999', 1) + `<ellipse cx="742" cy="662" rx="13" ry="6" fill="#909090"/>` + p('M742 637V660', 'none', '#999', 3) + p('M648 656L681 640V684L648 700Z', '#858585', '#929292', 1) + p('M655 707L698 690', 'none', '#999', 1, 'stroke-dasharray="2 1"') +
  p('M800 795L915 668L968 710V930L800 1045Z', '#767676') + p('M752 740L912 668L967 710L800 800Z', '#7c7c7c') + p('M800 800L967 710M800 872L962 780M800 945L962 846M800 1012L962 915', 'none', '#848484', 3) + p('M922 740L962 768L922 750ZM922 808L960 835L924 820Z', '#646464') + p('M752 755L796 800M752 825L796 872M752 895L796 945M752 965L796 1012', 'none', '#606060', 2.5) +
  p('M744 712V990M962 855V942M970 670V920', 'none', '#858585', 2) + p('M796 762V1048', 'none', '#858585', 3.5) + p('M918 630V670', 'none', '#777', 2) +
  p('M515 850V890H531V860ZM640 1000V1060H660V1000ZM710 975V1016H730V965Z', '#7d7d7d') + p('M512 800L590 763L665 850L730 900V966L648 1018L512 850Z', '#777') + p('M512 798L590 763V772L525 803L640 955V975L518 810Z', '#929292') + p('M512 818L640 975L648 985V1018L512 855Z', '#686868') + p('M638 935L728 897L730 935L648 982L638 965Z', '#8f8f8f') + p('M628 912L690 880L708 890L640 930Z', '#606060', '#8f8f8f', 1.3) + p('M645 950L728 910', 'none', '#aaa', 1.5) + p('M648 980L726 937M730 905V935', 'none', '#222', 1.2) + p('M568 913V915M566 982V984M792 976V980M678 763V765M733 736V738M963 771V774M947 828V830M637 908V910M484 860V862M772 739V741', 'none', '#111', 1.2) +
  p('M1348 232L1418 210L1474 240L1399 268Z', '#bcbcbc') + p('M1348 232L1399 268V405L1353 352Z', '#a9a9a9') + p('M1399 268L1474 240L1471 362L1399 405Z', '#b9b9b9') + p('M1348 232L1399 268V405M1399 268L1474 240', 'none', '#777', 1.7) + p('M1395 228L1416 246L1432 240L1412 232Z', '#999') +
  `<text transform="matrix(.72 -.3 0 1.500 1411 344)" font-size="22" font-weight="700" font-family="Liberation Sans" fill="#6c6c6c">RIGHT</text><text transform="matrix(.48 .48 0 1.400 1354 308)" font-size="22" font-weight="700" font-family="Liberation Sans" fill="#6c6c6c">FRONT</text>`;
const sceneFront = lines(836, 25.03, 12, 1554) +
  p('M428 160H538L545 1066H445Z', '#858585') + p('M428 160H440L456 1066H444ZM525 165H536L545 1073H534Z', L) + p('M429 183L431 290M431 300L432 375M433 405L434 490M435 520L436 555M437 665L438 712M536 165L546 1055', 'none', '#000', 1.2) + q(505, 156, 33, 10, '#858585') +
  q(534, 1056, 604, 15) + q(629, 624, 6, 433) + q(938, 624, 7, 433) + q(636, 678, 302, 15) + p('M636 689H938', 'none', '#555', 1) + q(636, 786, 302, 15) + q(636, 894, 302, 15) + q(636, 1002, 302, 15) +
  q(619, 711, 118, 109, '#989898') + p('M619 820H737M658 865H698', 'none', '#222', 1.3) + p('M672 821H682L684 858L702 863H656L669 858Z', L) + q(785, 795, 72, 72) + q(573, 867, 350, 15) + q(586, 882, 5, 171) + q(901, 882, 6, 171) +
  q(987, 873, 12, 30) + q(1102, 873, 13, 30) + q(999, 891, 105, 18, '#8c8c8c') + p('M1010 891V905M1036 891V905M1062 891V905M1088 891V905', 'none', '#555', 1) + q(981, 903, 140, 36, L) + q(981, 929, 140, 10, '#838383') + q(977, 939, 145, 42) + q(979, 980, 24, 77) + q(1098, 980, 26, 77) + p('M977 940H1009M977 979H1122', 'none', '#000', 1.3);
const sceneSide = q(818, 711, 112, 110, '#989898') + q(701, 799, 67, 68) + q(636, 867, 341, 15) + p('M868 822H878L880 860H868Z', L) + lines(720, 24.43, 20, 1524) +
  p('M818 820H928M856 864H890M699 864H704', 'none', '#000', 1.3) + q(652, 882, 3, 168) + q(958, 882, 5, 168) +
  p('M1011 159H1119L1105 1065H1003Z', '#858585') + p('M1011 165H1023L1015 1070H1001ZM1110 159H1119L1110 745Z', L) + p('M1023 168L1015 1052M1003 1072H1015M1048 1063H1058', 'none', '#000', 1.3) +
  q(612, 624, 8, 430) + q(915, 624, 5, 430) + q(620, 678, 296, 15) + q(620, 786, 296, 12) + q(620, 894, 296, 12) + q(620, 1002, 296, 12) + q(424, 1053, 592, 18) +
  p('M447 873H574L579 890V938H443V885Z', L) + p('M445 926L578 926L574 938H447Z', '#848484') + q(442, 937, 139, 44) + q(440, 980, 25, 75) + q(555, 980, 26, 75);

const ax = (l) => `<svg class="axis" width="60" height="60">${l}</svg>`;
const at = (x, y, s, f) => t(x, y, s, 11, f, 'DejaVu Sans Mono');
const gr = '#5f0', rd = '#f10', bl = '#00f';
const panels = [
  [sceneTop, '12 126 1542 966', 'top -Y', ax(p('M25 34.5H39', 0, rd) + p('M25.5 34V46', 0, bl) + at(25.5, 33, 'y', gr) + at(41.5, 34, 'x', rd) + at(25.5, 49, 'z', bl)), 31],
  [scenePersp, '20 126 1504 966', 'persp', ax(p('M25.5 35V22', 0, gr) + p('M25 34.5L15 38', 0, bl) + p('M25 34.5L31 39', 0, rd) + at(25.5, 19, 'y', gr) + at(13, 37, 'z', bl) + at(34, 40, 'x', rd)), 26],
  [sceneFront, '12 132 1542 966', 'front X', ax(at(25, 34, 'x', rd) + p('M25.5 35V21', 0, gr) + p('M25 34.5H39', 0, bl) + at(25.5, 19, 'y', gr) + at(41.5, 34, 'z', bl)), 33],
  [sceneSide, '20 132 1504 966', 'side -X', ax(at(25, 34, 'x', rd) + p('M25.5 35V21', 0, gr) + p('M25 34.5H11', 0, bl) + at(25.5, 19, 'y', gr) + at(9, 34, 'z', bl)), 34]];
const pm = [['View', 24], ['Shading', 42], ['Lighting', 43], ['Show', 28], ['Renderer', 48], ['Panels', 33]].map(a => `<span data-w="${a[1]}">${a[0]}</span>`).join('');
$('views').innerHTML = panels.map((a, i) => `<section class="panel ${i == 1 ? 'active' : ''}"><div class="pmenu">${pm}</div><div class="ptools row"></div><div class="canvas"><svg viewBox="${a[1]}" preserveAspectRatio="none" fill="none">${a[0]}</svg></div>${a[3]}<div class="camname"><span data-w="${a[4]}">${a[2]}</span></div></section>`).join('');
document.querySelectorAll('.ptools').forEach(el => {
  let x = -6; const out = [];
  tools.forEach(s => {
    if (s == '|') { out.push(C(x + 10, 5, bar)); x += x < 0 ? 6 : 11; return; }
    x += 19;
    const k = s[0], b = '*[#'.includes(k) ? s.slice(1) : s;
    out.push(C(x, 18, k == '[' ? bracket(`<g transform="translate(1.5 1) scale(.65)">${b}</g>`, 14, 18) : svg(b, 16), k == '*' ? 'sel' : k == '#' ? 'pframe' : ''));
  });
  out.push([755, 14, '<div class="exp">0</div>']);
  place(el, 0, out);
});

/* Time slider */
let ticks = ''; for (let i = 5; i <= 100; i += 5) ticks += `<div class="tick" ${i == 5 ? 'style="margin-left:69.500px"' : ''}><i></i><span data-w="${i > 99 ? 20 : i > 9 ? 13.5 : 6}">${i}</span></div>`;
const PB = ['M1 2V22M11 3L3 12L11 21ZM21 3L13 12L21 21Z', 'M3 2V22M17 3L7 12L17 21Z', 'k', 'M18 1L4 12L18 23Z', 'M6 1L20 12L6 23Z', 'K', 'M21 2V22M7 3L17 12L7 21Z', 'M23 2V22M3 3L11 12L3 21ZM13 3L21 12L13 21Z'];
place($('time'), 19, [[32, 1612, `<div class="slider"><div class="now"><span data-w="13">19</span></div>${ticks}</div>`], [1651, 88, '<div class="dark d18"><span data-w="13">19</span></div>'],
  ...PB.map((d, i) => C(1756.5 + i * 23, 20, svg(d == 'k' ? p('M5 0V24', 0, O, 3) + p('M19 3L9 12L19 21Z', W) : d == 'K' ? p('M19 0V24', 0, O, 3) + p('M5 3L15 12L5 21Z', W) : p(d, W, W, 1.2), 16)))]);

const otri = svg(p('M3 6H21L12 18Z', '#333', '#aaa', 2), 10);
const run = p('M13 7L9 12L14 16L12 23M9 12L5 20L0 22M12 8L7 9L5 13M13 9L17 13L21 12', 'none', '#e08a3c', 2.6) + c(16, 4, 2.5, '#e08a3c');
place($('range'), 19, [[33, 88, '<div class="dark d22">1</div>'], [129, 88, '<div class="dark d22">1</div>'],
  [224, 914, '<div class="track"><div class="thumbbar"><span><i class="knob"></i>1</span><span><b data-w="20">102</b><i class="knob"></i></span></div></div>'],
  [1145, 88, '<div class="dark d22"><span data-w="20">102</span></div>'], [1241, 88, '<div class="dark d22"><span data-w="20">200</span></div>'], cell(1334, bar),
  C(1357, 18, svg(p('M4 2H17V23L10.5 16L4 23Z', '#e0803c') + p('M13 6H24M18.5 0V12', 'none', '#ddd', 2.2), 18)), cell(1378, bar), C(1398, 10, otri),
  [1410, 102, '<div class="field"><span data-w="89">No Character Set</span></div>'], C(1527, 10, otri), [1539, 102, '<div class="field"><span data-w="78">No Anim Layer</span></div>'], cell(1651, bar),
  [1665, 101, '<div class="combo"><span data-w="33">24 fps</span><i class="tri"></i></div>'],
  C(1788, 18, svg(p('M2 12V6H20M17 2L21 6L17 10M22 12V18H4M7 14L3 18L7 22', 'none', W, 2.3), 16)), C(1817, 23, svg(r(1, 5, 21, 18, '#333', O, 2) + p('M3 7H20M3 21H20', 'none', O, 3, 'stroke-dasharray="2 1.5"') + grid(5, 9, 14, 2, '#ddd') + p('M14 0L24 6L14 12Z', '#ddd', '#444', 1), 19), 'sel h22'), cell(1839, bar),
  C(1861, 18, svg(p('M0 8H5L11 2V22L5 16H0Z', W) + p('M14 8Q17 12 14 16M17 5Q22 12 17 19', 'none', W, 2), 17)),
  C(1890, 18, svg(p('M3 9A9.5 9.5 0 0 1 21 9M21 15A9.5 9.5 0 0 1 3 15M21 3V9H15M3 21V15H9', 'none', W, 2) + p('M12 6V18M7 12H17', 'none', '#e08a3c', 2.2), 17)),
  C(1919, 20, svg(gear(6, 6, 3.5, W) + '<g transform="translate(5 2) scale(.9)">' + run + '</g>', 18))]);
place($('cmd'), 19, [C(41, 16, '<div class="q">?</div>'), C(912, 4, '<i class="cline"></i>'), tx(935, 22, 'MEL'), [970, 212, '<div class="dark d20"></div>'], [1191, 715, '<div class="dark d20"></div>'],
  C(1921, 18, svg(r(0, 0, 22, 3.5, W) + r(0, 5, 22, 19, W) + t(11, 18.5, '{;}', 12, '#333'), 18))]);

/* Dock */
const app = (bg, s) => r(1, 1, 28, 28, bg, 'none', 0, 'rx="6.5"') + s;
const wh = '#f6f6f6';
const dock = [
  [454, app('#2b8df5', p('M15 1H23Q29 1 29 8V23Q29 29 23 29H17Q15 20 16 17H12Q12 8 15 1Z', '#e6edf5') + p('M8 9V12M22 9V12M6 20Q15 27 24 20', 'none', '#223', 1.3)), 1],
  [493, app(wh, c(15, 15, 12, '#dd4b3e') + p('M15 15L5 8A12 12 0 0 0 14 27L20 17Z', '#2f9e50') + p('M15 15H27A12 12 0 0 1 14 27Z', '#fbc116') + p('M15 9H25.5A12 12 0 0 1 27 15H18Z', '#fbc116') + c(15, 15, 6, '#fff') + c(15, 15, 4.6, '#4285f4')), 1],
  [532.5, app('#4fd645', c(15.5, 14.5, 9.5, 'none', '#fff', 2) + p('M5 25L7 18L12 23Z', '#fff') + p('M11 9Q9 14 14 18T21 18L18 15L16 17Q13 15 13 13L14 11Z', '#fff')), 1],
  [571.5, app('#fff', p('M15 2L19 3H22L25 9L22 22L15 28L8 22L5 9L8 3H11Z', '#f4481e') + p('M10 8L15 9L20 8L23 12L19 17L20 19L15 24L10 19L11 17L7 12ZM11 13L14 14M19 13L16 14M15 14V18', '#fff', '#f4481e', 1)), 1],
  [610, app('#fff', p('M19 5L5 17M19 25L5 12', 'none', '#1f6fb0', 3.2) + p('M19 4L26 7V23L19 26Z', '#3ba0ea') + p('M19 11L13 15L19 19Z', '#fff'))],
  [649, app('#e9eef2', c(15, 15, 12.5, '#2fa3dd') + p('M6 15L23 8L20 23L14 18L12 22L11 17L20 10L9 16Z', '#fff'))],
  [688.5, r(-3, -3, 37, 36, '#3c0be8') + t(15.5, 12, 'amazon', 8.2, '#fff', 'Lato') + t(15.5, 24, 'music', 10, '#fff', 'Lato', 400) + p('M10 14Q15 17 21 14', 'none', '#fff', .8)],
  [727.5, app('#fafafa', p('M1 10V7Q1 1 7 1H23Q29 1 29 7V10Z', '#f0514b') + t(15, 8.5, 'JAN', 6.5, '#fff', 'Inter', 600) + t(15, 25, '6', 16, '#222', 'Inter', 400))],
  [766.5, app('#c9c9c9', r(7, 4, 16, 23, '#333', 'none', 0, 'rx="2"') + r(9, 6, 12, 4, '#667') + [13, 17, 21].map(y => p(`M9 ${y}H18`, 'none', '#eee', 2.2, 'stroke-dasharray="2.2 1.5"') + r(18.5, y - 1, 2.5, 2.5, '#f90')).join(''))],
  [805, app('#fbfbfb', p('M1 8H29M1 20H29M8 1V29M22 1V29', 'none', '#bcdcf0', .8) + p('M8 5H22L24 13H6Z', '#2b98e5') + c(15, 9, 3, '#fff') + p('M15 13V26M10 27H20', 'none', '#777', 1.4))],
  [844, app('#fbfbfb', r(6, 17, 4.5, 10, '#e8243c') + r(11, 11, 4.5, 16, '#f29f1f') + r(16, 6, 4.5, 21, '#3ac33a') + r(21, 9, 4, 18, '#2190f4'))],
  [883, app('#fff9ef', t(8, 20, '“', 22, '#f2a33a', 'Liberation Serif') + p('M24 3L26 5L14 25L11 28V23Z', '#e88a1c') + p('M14 25L11 28V23Z', '#333')), 1],
  [922, app('#f4f4f4', p('M2 8H28M2 13H28M2 18H28M2 23H28', 'none', '#ccc', .8) + p('M28 -2L17 22L13 31L15 20L25 -1Z', '#7d8a98')), 1],
  [961.5, app('#1e8df2', p('M17 6L9 22M13 6L21 22M6 19H18M21 19H25', 'none', '#fff', 2.6, 'stroke-linecap="round"'))],
  [1000, app('#b8bcc0', c(15, 15, 11, '#4a4a4a') + c(15, 15, 8.5, 'none', '#aaa', 2) + c(15, 15, 11, 'none', '#777', 2, 'stroke-dasharray="1.5 1"') + p('M15 15L23 17M15 15L9 22M15 15L11 7', 'none', '#aaa', 1.8) + c(15, 15, 2.5, '#ccc'))],
  [1039, r(1.5, 1.5, 27, 27, '#1c1c1e', '#8c9499', 1.5, 'rx="6"') + t(10, 12, '&gt;_', 8, '#fff', 'DejaVu Sans Mono'), 1],
  [1078.6, c(15, 15, 16, '#fff') + r(8, 12, 14, 13, '#3b86f5', 'none', 0, 'rx="2"') + p('M9 11A6 5 0 0 1 21 11Z', '#3ddc84') + p('M15 13L11 25M15 13L19 25M12 21H18', 'none', '#123', 1.8)],
  [1117.5, r(1.5, 1.5, 27, 27, '#101b1a', '#8c9c99', 1.5, 'rx="6"') + p('M1 10H29M1 20H29M10 1V29M20 1V29', 'none', '#27423e', .7) + p('M3 17H6L8 5L10 24L12 15L15 19L18 16L21 19L24 13L27 16', 'none', '#5bb9a0', 1), 1],
  [1156, app('#4fd95a', `<ellipse cx="15" cy="14" rx="9.500" ry="8.500" fill="#eef6ee"/>` + p('M8 19L7 24L14 21Z', '#e5efe5'))],
  [1195, app('#d8dcd8', c(15, 15, 12.5, '#4cd264') + c(15, 15, 8, 'none', '#8be69a', 1) + p('M15 15L10 4Q15 1 20 4Z', '#2b7de0') + c(15, 15, 4, '#fff') + c(15, 15, 2.8, '#2b88f0'))],
  [1234, app('#2b999c', c(10, 15, 4.2, 'none', '#fff', 1.8) + c(20, 15, 4.2, 'none', '#fff', 1.8) + p('M8.5 15H11.5M18.5 15H21.5M20 13.5V16.5', 'none', '#fff', 1))],
  [1273, p('M15 -1L29 7V23L15 32L1 23V7Z', '#c8c8c8') + p('M15 15L24 10V21L15 26L6 21V10ZM15 15L7 9L15 4L23 9Z', '#333') + p('M15 15V27M15 15L4 8M15 15L26 8', 'none', '#ddd', 2) + dia(15, 9, 3, 2.5, '#eee')],
  [1312, app('#f6f6f6', r(6, 4, 19, 17, '#3fa5cc') + r(4, 5, 3, 20, '#83cbe2') + r(6, 20, 19, 7, '#2f6880') + t(16, 17, 'M', 13, '#fff') + t(16, 26, 'AYA', 5, '#fff')), 1], [1341.5],
  [1369, app('#fdfdfd', r(9, 6, 18, 18, '#2b7cd3') + r(9, 15, 18, 9, '#185abd') + r(3, 9, 12, 12, '#1a52b0') + t(9, 18.5, 'W', 9, '#fff')), 1],
  [1408.6, app('#1f3de0', r(6, 6, 18, 18, 'none', '#cfe', 1.3) + r(9, 9, 12, 12, 'none', '#cfe', 1.3) + r(12, 12, 6, 6, 'none', '#cfe', 1.3) + c(15, 15, 1, '#fff'))],
  [1447, app('#8ab0e0', p('M1 17L12 15L29 20V22Q29 29 23 29H7Q1 29 1 22Z', '#dfe3e8') + p('M1 16H16L20 19H1Z', '#22355a') + r(16, 19, 12, 12, '#ddd', '#555', .8) + r(15, 16, 14, 5, '#111') + t(22, 29, 'OR', 5, '#333')), 1], [1475],
  [1503.6, p('M3 -1H27L23 31H7Z', '#59636a') + `<ellipse cx="15" cy="0" rx="12" ry="2.500" fill="#3f474c" stroke="#889"/>` + p('M11 4L12 30M19 4L18 30', 'none', '#707b82', 1.5)]
];
place($('dock'), 434, dock.map(a => a[1] ? C(a[0], 30, `<svg width="30" height="31" viewBox="0 0 30 30" fill="none">${a[1]}</svg>${a[2] ? '<i class="dot"></i>' : ''}`) : C(a[0], 2, '<i class="dsep"></i>')));

/* Track labels to their designed widths */
document.querySelectorAll('[data-w]').forEach(e => {
  const rg = document.createRange(); rg.selectNodeContents(e);
  const w = rg.getBoundingClientRect().width, n = e.textContent.length;
  e.style.letterSpacing = ((e.dataset.w - w) / n + (parseFloat(getComputedStyle(e).letterSpacing) || 0)).toFixed(3) + 'px';
});
document.querySelectorAll('[data-h]').forEach(e => { e.style.letterSpacing = ((e.dataset.h - e.offsetHeight) / e.textContent.length).toFixed(3) + 'px'; });
```
